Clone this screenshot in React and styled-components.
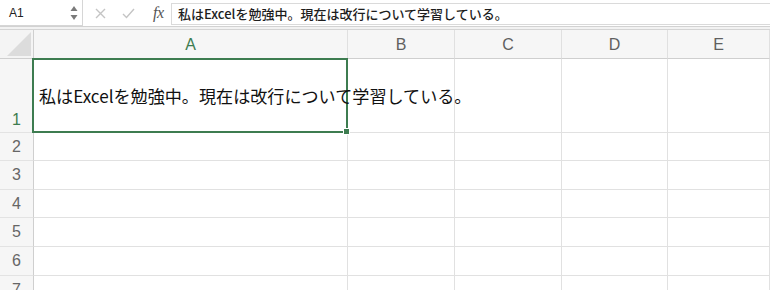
import React from "react";
import styled, { createGlobalStyle } from "styled-components";

const GlobalStyle = createGlobalStyle`
  html, body {
    margin: 0;
    padding: 0;
    background: #ffffff;
    overflow: hidden;
  }
  body {
    font-family: "Noto Sans CJK JP", "Liberation Sans", sans-serif;
  }
`;

const Page = styled.div`
  width: 770px;
  height: 290px;
  display: flex;
  flex-direction: column;
  overflow: hidden;
`;

const FormulaBar = styled.div`
  display: flex;
  align-items: center;
  flex-shrink: 0;
  height: 27px;
  border-bottom: 1px solid #d2d2d2;
  box-sizing: border-box;
  background: #ffffff;
`;

const NameBox = styled.div`
  position: relative;
  width: 83px;
  height: 26px;
  box-sizing: border-box;
  border: 1px solid #d6d6d6;
  border-left: none;
  border-top: none;
  display: flex;
  align-items: center;
  padding-left: 9px;
  font-family: "Liberation Sans", "Noto Sans CJK JP", sans-serif;
  font-size: 12px;
  color: #222;
`;

const Stepper = styled.svg`
  position: absolute;
  right: 4px;
  top: 5px;
`;

const Actions = styled.div`
  display: flex;
  align-items: center;
  gap: 16px;
  padding-left: 12px;
  width: 88px;
  box-sizing: border-box;
`;

const Fx = styled.span`
  font-family: "Liberation Serif", serif;
  font-style: italic;
  font-size: 16px;
  color: #555;
  margin-left: 2px;
  letter-spacing: -0.5px;
`;

const FormulaInput = styled.div`
  flex: 1;
  height: 22px;
  margin-top: 1px;
  box-sizing: border-box;
  border: 1px solid #dadada;
  border-right: none;
  display: flex;
  align-items: center;
  padding-left: 6px;
  font-size: 13px;
  font-weight: 500;
  color: #1e1e1e;
  white-space: nowrap;
`;

const Band = styled.div`
  flex-shrink: 0;
  height: 3px;
  background: #f2f2f2;
  border-bottom: 1px solid #d4d4d4;
  box-sizing: border-box;
`;

const Sheet = styled.div`
  flex: 1;
  min-height: 0;
  overflow: hidden;
  display: grid;
  grid-template-columns: 34px 314px 107px 107px 106px 1fr;
  grid-template-rows: 29px 74px 28px 29px 28px 29px 29px 29px;
`;

const Corner = styled.div`
  background: #f4f4f4;
  border-right: 1px solid #cfcfcf;
  border-bottom: 1px solid #cfcfcf;
  box-sizing: border-box;
  display: flex;
  align-items: flex-end;
  justify-content: flex-end;
  padding: 0 2px 2px 0;
`;

const ColHead = styled.div`
  background: #f6f6f6;
  border-right: 1px solid #e0e0e0;
  border-bottom: 1px solid #cfcfcf;
  box-sizing: border-box;
  display: flex;
  align-items: center;
  justify-content: center;
  font-family: "Liberation Sans", sans-serif;
  font-size: 16px;
  color: ${(p) => (p.active ? "#3d7c50" : "#5f5f5f")};
  padding-top: 1px;
`;

const RowHead = styled.div`
  background: #f6f6f6;
  border-right: 1px solid #cfcfcf;
  border-bottom: 1px solid #e3e3e3;
  box-sizing: border-box;
  display: flex;
  align-items: ${(p) => (p.tall ? "flex-end" : "center")};
  justify-content: center;
  padding-bottom: ${(p) => (p.tall ? "3px" : "0")};
  font-family: "Liberation Sans", sans-serif;
  font-size: 16px;
  color: ${(p) => (p.active ? "#3d7c50" : "#666666")};
`;

const Cell = styled.div`
  position: relative;
  border-right: 1px solid #e1e1e1;
  border-bottom: 1px solid #e1e1e1;
  box-sizing: border-box;
  background: #ffffff;
`;

const ActiveCell = styled(Cell)`
  display: flex;
  align-items: center;
  padding-left: 5px;
  overflow: visible;
  z-index: 2;
  background: transparent;
`;

const CellText = styled.span`
  font-size: 17.1px;
  color: #111;
  white-space: nowrap;
  position: relative;
  z-index: 3;
`;

const Selection = styled.div`
  position: absolute;
  left: -2px;
  top: -1px;
  right: -1px;
  bottom: -1px;
  border: 2px solid #3d7c50;
  pointer-events: none;
`;

const Handle = styled.div`
  position: absolute;
  right: -4px;
  bottom: -4px;
  width: 5px;
  height: 5px;
  background: #3d7c50;
  border: 1px solid #fff;
`;

const columns = ["A", "B", "C", "D", "E"];
const rows = [1, 2, 3, 4, 5, 6, 7];
const text = "私はExcelを勉強中。現在は改行について学習している。";

export default function App() {
  return (
    <Page>
      <GlobalStyle />
      <FormulaBar>
        <NameBox>
          A1
          <Stepper width="8" height="16" viewBox="0 0 8 16">
            <path d="M4 1 L7.5 6 L0.5 6 Z" fill="#7a7a7a" />
            <path d="M4 15 L7.5 10 L0.5 10 Z" fill="#7a7a7a" />
          </Stepper>
        </NameBox>
        <Actions>
          <svg width="11" height="11" viewBox="0 0 11 11">
            <path d="M1 1 L10 10 M10 1 L1 10" stroke="#c4c4c4" strokeWidth="1.4" />
          </svg>
          <svg width="13" height="11" viewBox="0 0 13 11">
            <path d="M1 6 L4.5 9.5 L12 1" stroke="#c4c4c4" strokeWidth="1.4" fill="none" />
          </svg>
          <Fx>fx</Fx>
        </Actions>
        <FormulaInput>{text}</FormulaInput>
      </FormulaBar>
      <Band />
      <Sheet>
        <Corner>
          <svg width="24" height="24" viewBox="0 0 24 24">
            <path d="M24 0 L24 24 L0 24 Z" fill="#dcdcdc" />
          </svg>
        </Corner>
        {columns.map((c) => (
          <ColHead key={c} active={c === "A"}>
            {c}
          </ColHead>
        ))}
        {rows.map((r) => (
          <React.Fragment key={r}>
            <RowHead tall={r === 1} active={r === 1}>
              {r}
            </RowHead>
            {columns.map((c) =>
              r === 1 && c === "A" ? (
                <ActiveCell key={c}>
                  <CellText>{text}</CellText>
                  <Selection>
                    <Handle />
                  </Selection>
                </ActiveCell>
              ) : (
                <Cell key={c} />
              )
            )}
          </React.Fragment>
        ))}
      </Sheet>
    </Page>
  );
}
